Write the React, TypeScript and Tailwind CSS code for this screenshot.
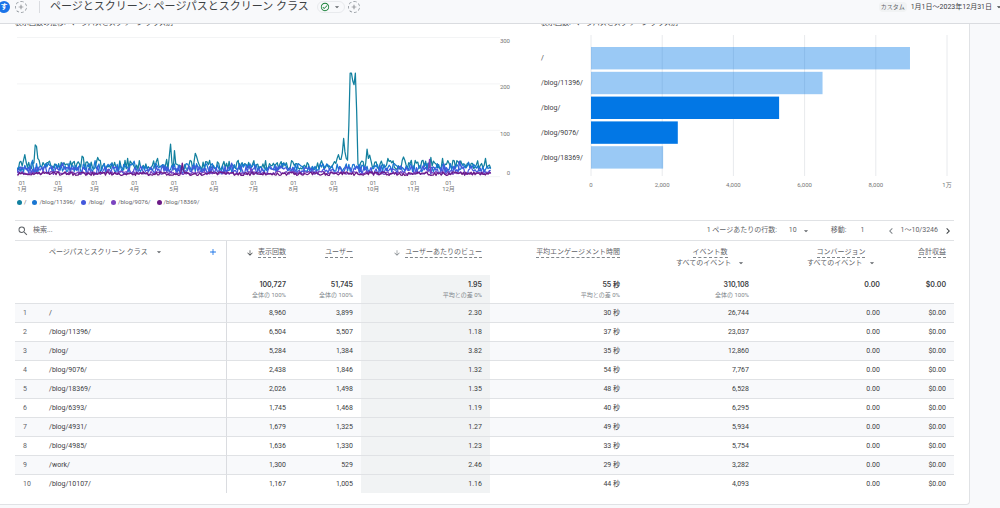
import { useState } from 'react';
import {
  MdAdd,
  MdArrowDownward,
  MdArrowDropDown,
  MdChevronLeft,
  MdChevronRight,
  MdOutlineCheckCircle,
  MdSearch,
} from 'react-icons/md';

interface Row {
  path: string;
  views: string;
  users: string;
  perUser: string;
  engagement: string;
  events: string;
}

const rows: Row[] = [
  { path: '/', views: '8,960', users: '3,899', perUser: '2.30', engagement: '30 秒', events: '26,744' },
  { path: '/blog/11396/', views: '6,504', users: '5,507', perUser: '1.18', engagement: '37 秒', events: '23,037' },
  { path: '/blog/', views: '5,284', users: '1,384', perUser: '3.82', engagement: '35 秒', events: '12,860' },
  { path: '/blog/9076/', views: '2,438', users: '1,846', perUser: '1.32', engagement: '54 秒', events: '7,767' },
  { path: '/blog/18369/', views: '2,026', users: '1,498', perUser: '1.35', engagement: '48 秒', events: '6,528' },
  { path: '/blog/6393/', views: '1,745', users: '1,468', perUser: '1.19', engagement: '40 秒', events: '6,295' },
  { path: '/blog/4931/', views: '1,679', users: '1,325', perUser: '1.27', engagement: '49 秒', events: '5,934' },
  { path: '/blog/4985/', views: '1,636', users: '1,330', perUser: '1.23', engagement: '33 秒', events: '5,754' },
  { path: '/work/', views: '1,300', users: '529', perUser: '2.46', engagement: '29 秒', events: '3,282' },
  { path: '/blog/10107/', views: '1,167', users: '1,005', perUser: '1.16', engagement: '44 秒', events: '4,093' },
];

interface Series {
  name: string;
  color: string;
  base: number;
  spread: number;
  peaks: Record<number, number>;
}

const series: Series[] = [
  {
    name: '/',
    color: '#12809f',
    base: 13,
    spread: 21,
    peaks: {
      6: 46, 14: 67, 15: 64, 16: 38, 17: 34, 50: 43, 51: 40, 62: 40, 85: 38, 108: 38,
      115: 36, 117: 42, 118: 69, 119: 30, 121: 55, 122: 26, 136: 30, 137: 49, 138: 42, 139: 32,
      140: 24, 246: 38, 247: 46, 248: 36, 249: 36, 250: 50, 251: 81, 252: 52, 253: 38, 254: 34,
      255: 110, 256: 222, 257: 222, 258: 205, 259: 197, 260: 222, 261: 140, 262: 26, 269: 58,
      270: 38, 271: 45, 285: 38, 297: 41, 298: 34, 318: 40, 327: 38, 360: 38,
    },
  },
  { name: '/blog/11396/', color: '#1976d2', base: 8, spread: 19, peaks: { 12: 34, 60: 33, 90: 32, 347: 30 } },
  { name: '/blog/', color: '#4358dc', base: 4, spread: 18, peaks: { 35: 28, 165: 28, 328: 26, 340: 32 } },
  { name: '/blog/9076/', color: '#7b44c0', base: 3, spread: 7, peaks: { 70: 14, 180: 16, 317: 36 } },
  { name: '/blog/18369/', color: '#6c1a86', base: 1, spread: 8, peaks: { 127: 28, 128: 12 } },
];

const months = [
  { label: '1月', x: '1.4%' },
  { label: '2月', x: '8.6%' },
  { label: '3月', x: '15.9%' },
  { label: '4月', x: '23.9%' },
  { label: '5月', x: '31.8%' },
  { label: '6月', x: '39.8%' },
  { label: '7月', x: '47.7%' },
  { label: '8月', x: '55.7%' },
  { label: '9月', x: '63.7%' },
  { label: '10月', x: '71.6%' },
  { label: '11月', x: '79.7%' },
  { label: '12月', x: '86.7%' },
];

const bars = [
  { path: '/', value: 8960, selected: false },
  { path: '/blog/11396/', value: 6504, selected: false },
  { path: '/blog/', value: 5284, selected: true },
  { path: '/blog/9076/', value: 2438, selected: true },
  { path: '/blog/18369/', value: 2026, selected: false },
];

const barTicks = ['0', '2,000', '4,000', '6,000', '8,000', '1万'];

function linePoints({ base, spread, peaks }: Series, seed: number) {
  let state = seed * 7919 + 17;
  const points: string[] = [];
  for (let day = 0; day < 365; day++) {
    state = (state * 1103515245 + 12345) % 2147483648;
    const value = peaks[day] ?? base + (state / 2147483648) * spread;
    points.push(`${day},${(300 - value).toFixed(1)}`);
  }
  return points.join(' ');
}

function TrendChart() {
  return (
    <div>
      <h2 className="-mt-[6px] h-[10px] whitespace-nowrap text-[7px] leading-[10px] text-[#3c4043]">
        表示回数の推移: ページパスとスクリーン クラス別
      </h2>
      <svg className="mt-[2px] block h-[164px] w-full overflow-visible" role="img" aria-label="表示回数の推移">
        {[300, 200, 100, 0].map((tick, i) => (
          <g key={tick}>
            <line x1="2" x2="97%" y1={7.5 + i * 46.4} y2={7.5 + i * 46.4} stroke="#f3f4f5" />
            <text x="99%" y={i === 3 ? 145 : 13 + i * 46.4} textAnchor="end" className="fill-[#757575] text-[6px]">
              {tick}
            </text>
          </g>
        ))}
        <svg x="2" y="7" width="95%" height="139" viewBox="0 0 365 300" preserveAspectRatio="none">
          {series.map((s, i) => (
            <polyline
              key={s.name}
              points={linePoints(s, i + 1)}
              fill="none"
              stroke={s.color}
              strokeWidth="1.25"
              strokeLinejoin="round"
              vectorEffect="non-scaling-stroke"
            />
          ))}
        </svg>
        {months.map((m) => (
          <g key={m.label} textAnchor="middle" className="fill-[#757575] text-[6px]">
            <text x={m.x} y="155">01</text>
            <text x={m.x} y="161">{m.label}</text>
          </g>
        ))}
      </svg>
      <ul className="mt-[3px] flex h-[10px] items-center gap-[6px] pl-[2px] text-[6px] leading-[10px] text-[#5f6368]">
        {series.map((s) => (
          <li key={s.name} className="flex items-center gap-[2px]">
            <span className="size-[5px] rounded-full" style={{ backgroundColor: s.color }} />
            {s.name}
          </li>
        ))}
      </ul>
    </div>
  );
}

function BarChart() {
  return (
    <div>
      <h2 className="-mt-[6px] h-[10px] whitespace-nowrap text-[7px] leading-[10px] text-[#3c4043]">
        表示回数: ページパスとスクリーン クラス別
      </h2>
      <div className="mt-[2px] flex">
        <ul className="w-[50px] shrink-0 pt-4 text-[7px] leading-[25px] text-[#3c4043]">
          {bars.map((b) => (
            <li key={b.path}>{b.path}</li>
          ))}
        </ul>
        <div className="grow pr-[7px]">
          <svg className="block h-[164px] w-full overflow-visible" role="img" aria-label="表示回数">
            {barTicks.map((tick, i) => (
              <g key={tick}>
                <line x1={`${i * 20}%`} x2={`${i * 20}%`} y1="5" y2="146" stroke="#e8eaed" />
                <text x={`${i * 20}%`} y="157" textAnchor="middle" className="fill-[#757575] text-[6px]">
                  {tick}
                </text>
              </g>
            ))}
            {bars.map((b, i) => (
              <rect
                key={b.path}
                y={17 + i * 24.8}
                width={`${b.value / 100}%`}
                height="22.4"
                fill="#0277e5"
                fillOpacity={b.selected ? 1 : 0.4}
              />
            ))}
          </svg>
        </div>
      </div>
    </div>
  );
}

function TableToolbar() {
  const [query, setQuery] = useState('');
  const [page, setPage] = useState('1');

  return (
    <div className="flex h-[21px] items-center border-y border-[#e0e2e5] text-[7px] text-[#5f6368]">
      <MdSearch className="ml-[2px] size-3" />
      <input
        type="search"
        aria-label="検索"
        placeholder="検索..."
        value={query}
        onChange={(e) => setQuery(e.target.value)}
        className="ml-1 min-w-0 grow bg-transparent outline-none placeholder:text-[#5f6368]"
      />
      <label htmlFor="page-size">1 ページあたりの行数:</label>
      <span className="relative ml-3 flex items-center">
        <select id="page-size" defaultValue="10" className="w-[22px] appearance-none bg-transparent outline-none">
          <option>10</option>
          <option>25</option>
          <option>50</option>
        </select>
        <MdArrowDropDown className="pointer-events-none absolute right-0 size-[10px]" />
      </span>
      <label htmlFor="page-number" className="ml-5">移動:</label>
      <input
        id="page-number"
        value={page}
        onChange={(e) => setPage(e.target.value)}
        className="ml-[14px] w-6 bg-transparent outline-none"
      />
      <button type="button" aria-label="前のページ" className="text-[#80868b]">
        <MdChevronLeft className="size-3" />
      </button>
      <span className="mx-1 whitespace-nowrap">1～10/3246</span>
      <button type="button" aria-label="次のページ" className="text-[#3c4043]">
        <MdChevronRight className="size-3" />
      </button>
    </div>
  );
}

function Metric({ name, sort }: { name: string; sort?: 'active' | 'idle' }) {
  return (
    <span className="inline-flex items-center gap-1 whitespace-nowrap">
      {sort && (
        <MdArrowDownward className={`size-2 ${sort === 'active' ? 'text-[#3c4043]' : 'text-[#80868b]'}`} />
      )}
      <span className="border-b border-dashed border-[#80868b]">{name}</span>
    </span>
  );
}

function EventMetric({ name }: { name: string }) {
  return (
    <div className="mr-[3px] inline-flex flex-col items-center">
      <Metric name={name} />
      <span className="relative flex items-center">
        <select aria-label={name} className="h-[10px] appearance-none bg-transparent pr-[14px] pl-[2px] outline-none">
          <option>すべてのイベント</option>
        </select>
        <MdArrowDropDown className="pointer-events-none absolute right-0 size-[10px]" />
      </span>
    </div>
  );
}

function Total({ value, note }: { value: string; note?: string }) {
  return (
    <>
      <div className="font-[Inter,'Noto_Sans_CJK_JP',sans-serif] font-semibold text-[#3c4043]">{value}</div>
      {note && <div className="text-[6px] text-[#80868b]">{note}</div>}
    </>
  );
}

function PagesTable() {
  return (
    <table className="w-full table-fixed border-separate border-spacing-0 text-right text-[7px] leading-[10px] text-[#3c4043]">
      <colgroup>
        <col className="w-[34px]" />
        <col className="w-[178px]" />
        <col className="w-[67px]" />
        <col className="w-[67px]" />
        <col className="w-[129px]" />
        <col className="w-[138px]" />
        <col className="w-[129px]" />
        <col className="w-[131px]" />
        <col className="w-[66px]" />
      </colgroup>
      <thead className="text-[#5f6368]">
        <tr className="h-[34px] align-top [&>th]:pt-[6px] [&>th]:pr-2 [&>th]:font-normal">
          <th />
          <th className="border-r border-[#dadce0]">
            <div className="flex items-center justify-between">
              <button type="button" className="flex items-center gap-[6px]">
                ページパスとスクリーン クラス
                <MdArrowDropDown className="size-[10px]" />
              </button>
              <button type="button" aria-label="ディメンションを追加" className="text-[#1a73e8]">
                <MdAdd className="size-[10px]" />
              </button>
            </div>
          </th>
          <th><Metric name="表示回数" sort="active" /></th>
          <th><Metric name="ユーザー" /></th>
          <th><Metric name="ユーザーあたりのビュー" sort="idle" /></th>
          <th><Metric name="平均エンゲージメント時間" /></th>
          <th><EventMetric name="イベント数" /></th>
          <th><EventMetric name="コンバージョン" /></th>
          <th><Metric name="合計収益" /></th>
        </tr>
        <tr className="h-7 align-top [&>td]:pt-[5px] [&>td]:pr-2">
          <td />
          <td className="border-r border-[#dadce0]" />
          <td><Total value="100,727" note="全体の 100%" /></td>
          <td><Total value="51,745" note="全体の 100%" /></td>
          <td className="bg-[#f1f3f4]"><Total value="1.95" note="平均との差 0%" /></td>
          <td><Total value="55 秒" note="平均との差 0%" /></td>
          <td><Total value="310,108" note="全体の 100%" /></td>
          <td><Total value="0.00" /></td>
          <td><Total value="$0.00" /></td>
        </tr>
      </thead>
      <tbody>
        {rows.map((row, i) => (
          <tr
            key={row.path}
            className="h-[19px] odd:bg-[#f8f9fb] [&>td]:border-t [&>td]:border-t-[#e0e2e5] [&>td]:pr-2"
          >
            <td className="pl-2 text-left text-[#5f6368]">{i + 1}</td>
            <td className="border-r border-r-[#dadce0] text-left">{row.path}</td>
            <td>{row.views}</td>
            <td>{row.users}</td>
            <td className="bg-[#f1f3f4]">{row.perUser}</td>
            <td>{row.engagement}</td>
            <td>{row.events}</td>
            <td>0.00</td>
            <td>$0.00</td>
          </tr>
        ))}
      </tbody>
    </table>
  );
}

function AddButton({ label }: { label: string }) {
  return (
    <button
      type="button"
      aria-label={label}
      className="flex size-3 shrink-0 items-center justify-center rounded-full border border-dashed border-[#9aa0a6] text-[#5f6368]"
    >
      <MdAdd className="size-2" />
    </button>
  );
}

function ReportHeader() {
  return (
    <header className="relative z-10 flex h-6 items-start overflow-hidden border-b border-[#dadce0] bg-[#f8f9fb]">
      <div className="-ml-[2px] flex h-[14px] grow items-center">
        <span className="flex size-3 items-center justify-center rounded-full bg-[#1a73e8] text-[7px] leading-none font-bold text-white">
          す
        </span>
        <span className="ml-[5px] flex">
          <AddButton label="比較を追加" />
        </span>
        <span className="ml-3 h-3 border-l border-[#dadce0]" />
        <h1 className="ml-[10px] text-[11px] leading-[14px] whitespace-nowrap text-[#3c4043]">
          ページとスクリーン: ページパスとスクリーン クラス
        </h1>
        <button
          type="button"
          aria-label="レポートの状態"
          className="ml-2 flex h-3 w-7 items-center justify-between rounded-full border border-[#e8eaed] px-[2px] text-[#5f6368]"
        >
          <MdOutlineCheckCircle className="size-[10px] text-[#188038]" />
          <MdArrowDropDown className="size-[10px]" />
        </button>
        <span className="ml-[3px] flex">
          <AddButton label="フィルタを追加" />
        </span>
      </div>
      <button type="button" className="-mr-1 flex h-[14px] items-center whitespace-nowrap text-[#3c4043]">
        <span className="rounded-sm bg-[#f1f3f4] px-[2px] text-[6px] leading-[10px] text-[#5f6368]">カスタム</span>
        <span className="ml-1 text-[7px]">1月1日～2023年12月31日</span>
        <MdArrowDropDown className="ml-[2px] size-[10px]" />
      </button>
    </header>
  );
}

export default function App() {
  return (
    <div className="min-h-screen bg-[#f8f9fb] font-[Roboto,'Noto_Sans_CJK_JP',sans-serif]">
      <ReportHeader />
      <main className="mr-[30px] rounded-br-sm border-r border-b border-[#e0e2e5] bg-white pr-[15px] pb-[11px] pl-[15px]">
        <div className="grid grid-cols-[500fr_413fr] gap-[26px]">
          <TrendChart />
          <BarChart />
        </div>
        <div className="mt-[13px]">
          <TableToolbar />
          <PagesTable />
        </div>
      </main>
    </div>
  );
}
